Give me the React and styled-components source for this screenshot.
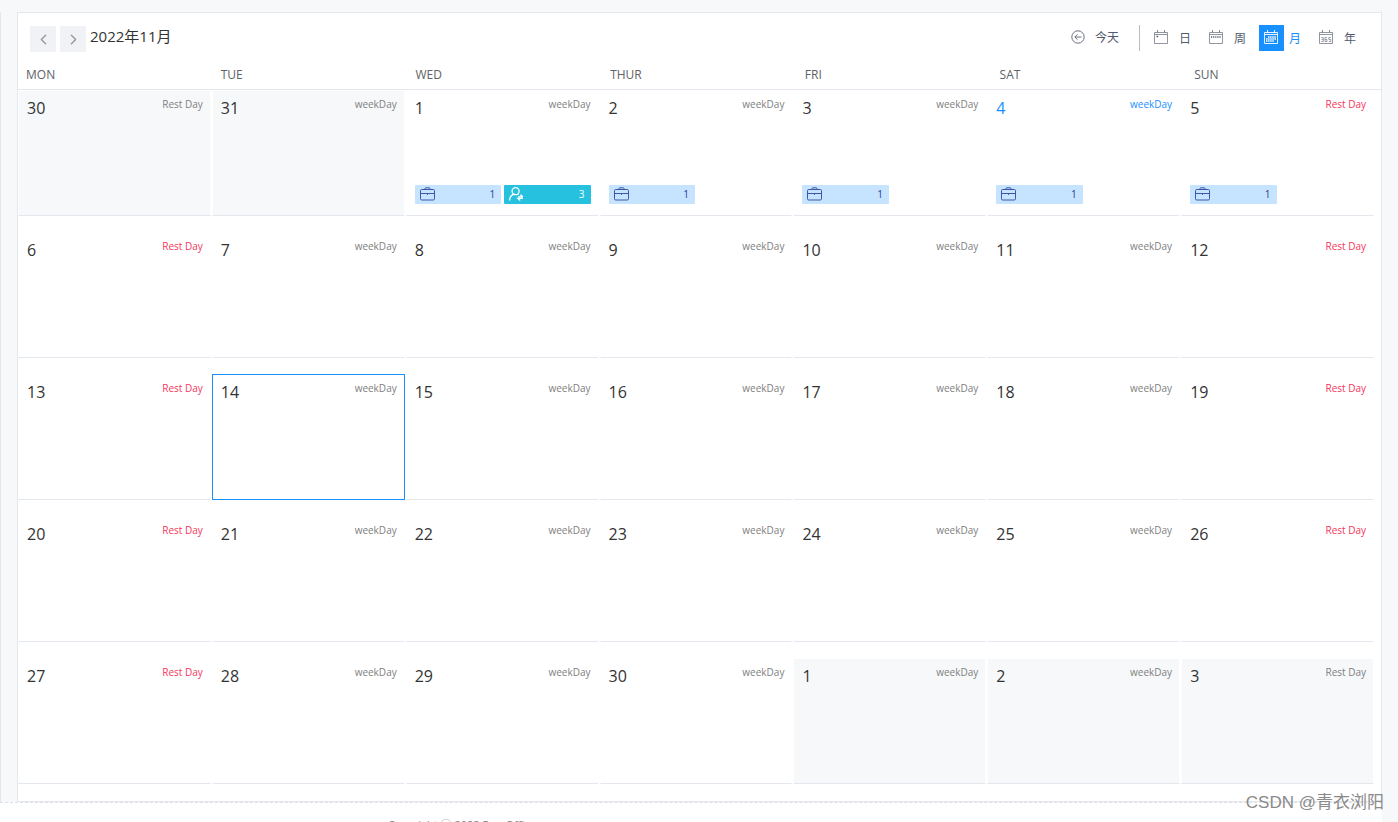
import React, { useState } from "react";
import styled, { createGlobalStyle, css } from "styled-components";
import { FiChevronLeft, FiChevronRight } from "react-icons/fi";

const WEEK_TITLES = ["MON", "TUE", "WED", "THUR", "FRI", "SAT", "SUN"];

// two days of October, thirty of November, three of December
const NUMBERS = [
  30,
  31,
  ...Array.from({ length: 30 }, (_, i) => i + 1),
  1,
  2,
  3,
];

const DAYS = NUMBERS.map((number, i) => ({
  id: i,
  number,
  isOther: i < 2 || i > 31,
  isRest: i % 7 === 0 || i % 7 === 6,
  isToday: i === 5,
}));

const EVENTS = {
  2: [
    { type: "work", count: 1 },
    { type: "person", count: 3 },
  ],
  3: [{ type: "work", count: 1 }],
  4: [{ type: "work", count: 1 }],
  5: [{ type: "work", count: 1 }],
  6: [{ type: "work", count: 1 }],
};

const VIEWS = [
  { id: "day", label: "日" },
  { id: "week", label: "周" },
  { id: "month", label: "月" },
  { id: "year", label: "年" },
];

export default function App() {
  const [view, setView] = useState("month");
  const [selectedDay, setSelectedDay] = useState(15);

  return (
    <Page>
      <GlobalStyle />
      <Main>
        <Content>
          <Card>
            <Toolbar>
              <NavButton aria-label="Previous month">
                <FiChevronLeft />
              </NavButton>
              <NavButton aria-label="Next month">
                <FiChevronRight />
              </NavButton>
              <Title>2022年11月</Title>
              <TodayButton>
                <BackIcon />
                今天
              </TodayButton>
              <Views>
                {VIEWS.map(({ id, label }) => (
                  <ViewButton
                    key={id}
                    $isActive={view === id}
                    onClick={() => setView(id)}
                  >
                    <span className="icon">
                      <CalendarIcon type={id} />
                    </span>
                    {label}
                  </ViewButton>
                ))}
              </Views>
            </Toolbar>
            <WeekHeader>
              {WEEK_TITLES.map((title) => (
                <span key={title}>{title}</span>
              ))}
            </WeekHeader>
            <MonthGrid>
              {DAYS.map((day) => (
                <DayCell
                  key={day.id}
                  $isSelected={selectedDay === day.id}
                  onClick={() => setSelectedDay(day.id)}
                >
                  <DayBody $isOther={day.isOther}>
                    <DayTop>
                      <DayNumber $isToday={day.isToday}>{day.number}</DayNumber>
                      <DayType
                        $isToday={day.isToday}
                        $isRest={day.isRest && !day.isOther}
                      >
                        {day.isRest ? "Rest Day" : "weekDay"}
                      </DayType>
                    </DayTop>
                    <Events>
                      {(EVENTS[day.id] || []).map(({ type, count }) => (
                        <EventTag key={type} $type={type}>
                          {type === "work" ? <BriefcaseIcon /> : <PersonIcon />}
                          {count}
                        </EventTag>
                      ))}
                    </Events>
                  </DayBody>
                </DayCell>
              ))}
            </MonthGrid>
          </Card>
        </Content>
        <Footer>Copyright ⓒ 2022 EasyOffice</Footer>
        <Watermark>CSDN @青衣浏阳</Watermark>
      </Main>
    </Page>
  );
}

function BackIcon() {
  return (
    <svg width="14" height="14" viewBox="0 0 14 14" fill="none" stroke="#6b7080">
      <circle cx="7" cy="7" r="6.2" />
      <path d="M10.5 7H4M6.5 4.3L3.8 7l2.7 2.7" />
    </svg>
  );
}

function CalendarIcon({ type }) {
  return (
    <svg width="14" height="14" viewBox="0 0 14 14" fill="none" stroke="currentColor">
      <path d="M.5 2.5h13v11H.5zM.5 4.5h13" strokeWidth="0.9" />
      <path d="M3.5 0v3M10.5 0v3" />
      {type === "day" && <path d="M2.5 6.5h1.6" stroke="#515a6e" strokeWidth="1.6" />}
      {type === "week" && (
        <path
          d="M2 7h10"
          stroke="#515a6e"
          strokeWidth="1.4"
          strokeDasharray="1.2 0.9"
        />
      )}
      {type === "month" && (
        <path
          d="M4 7h8M2 9h10M2 11h8"
          strokeWidth="1.5"
          strokeDasharray="1.5 0.6"
        />
      )}
      {type === "year" && (
        <path
          d="M2.3 7.5h2v4h-2M2.6 9.5h1.7M8 7.5H6v4h2v-2H6M11.8 7.5h-2v2h2v2h-2"
          strokeWidth="0.8"
        />
      )}
    </svg>
  );
}

function BriefcaseIcon() {
  return (
    <svg width="15" height="14" viewBox="0 0 15 14" fill="none" stroke="#3a57a8">
      <rect x="0.5" y="2.5" width="14" height="10.5" rx="1.2" />
      <path d="M5 2.5V1.6Q5 .8 5.8.8h3.4q.8 0 .8.8v.9M.5 6.5h14M7.5 6.5v1.4" />
    </svg>
  );
}

function PersonIcon() {
  return (
    <svg width="14" height="14" viewBox="0 0 14 14" fill="none" stroke="#fff" strokeWidth="1.3">
      <circle cx="6.6" cy="4.2" r="3.5" />
      <path d="M.6 13.6c0-3.2 1.6-5.4 4.2-6.2M8.4 7.2l1 .6" />
      <path d="M9 9.8h4.8L11.4 7.8M13.8 11.4H9l2.2 2" />
    </svg>
  );
}

const GlobalStyle = createGlobalStyle`
  * {
    box-sizing: border-box;
  }

  body {
    margin: 0;
    background: #f6f8fa;
    color: #333;
    font-family: "Open Sans", "Noto Sans CJK SC", sans-serif;
    font-size: 12px;
  }

  button {
    padding: 0;
    border: 0;
    background: none;
    color: inherit;
    font: inherit;
    text-align: left;
    cursor: pointer;
  }

  svg {
    display: block;
    flex: none;
  }
`;

const Page = styled.div`
  height: 100vh;
  overflow: hidden;
  padding: 12px 16px 0 0;
`;

const Main = styled.main`
  position: relative;
`;

const Content = styled.div`
  padding-left: 16px;
  border-left: 1px solid #e4e7ed;
`;

const Card = styled.section`
  border: 1px solid #e4e7ed;
  background: #fff;
  padding-bottom: 17px;
`;

const Toolbar = styled.div`
  display: flex;
  align-items: center;
  height: 48px;
  padding: 2px 25px 0 12px;
`;

const NavButton = styled.button`
  display: flex;
  align-items: center;
  justify-content: center;
  width: 26px;
  height: 26px;
  margin: 2px 4px 0 0;
  background: #f0f2f5;
  color: #999;
  font-size: 17px;
`;

const Title = styled.h1`
  margin: 0;
  padding-bottom: 4px;
  font-size: 15px;
  font-weight: 400;
  line-height: 20px;
`;

const TodayButton = styled.button`
  display: flex;
  align-items: center;
  gap: 10px;
  margin-left: auto;
  padding-bottom: 2px;
  color: #515a6e;
`;

const Views = styled.div`
  display: flex;
  gap: 13px;
  margin-left: 20px;
  padding-left: 9px;
  border-left: 1px solid #b8bcc4;
`;

const ViewButton = styled.button`
  display: flex;
  align-items: center;
  gap: 5px;
  color: #515a6e;

  .icon {
    display: flex;
    align-items: center;
    justify-content: center;
    width: 25px;
    height: 26px;
    padding-bottom: 2px;
    color: #858a96;
  }

  ${({ $isActive }) =>
    $isActive &&
    css`
      color: #1890ff;

      .icon {
        background: #1890ff;
        color: #fff;
      }
    `}
`;

const WeekHeader = styled.div`
  display: grid;
  grid-template-columns: repeat(7, 1fr);
  height: 29px;
  border-bottom: 1px solid #e4e7ed;
  color: #606266;
  font-size: 12px;
  line-height: 28px;

  span {
    padding-left: 8px;
  }
`;

const MonthGrid = styled.div`
  display: grid;
  grid-template-columns: repeat(7, 1fr);
  row-gap: 16px;
  padding-right: 6px;
`;

const DayCell = styled.button`
  display: flex;
  height: 126px;
  margin-right: 1px;
  border: 1px solid transparent;
  border-bottom-color: #e4e7ed;

  ${({ $isSelected }) =>
    $isSelected &&
    css`
      border-color: #1890ff;
    `}
`;

const DayBody = styled.span`
  display: flex;
  flex-direction: column;
  justify-content: space-between;
  width: 100%;
  height: 100%;
  padding: 5px 7px 11px 8px;
  background: ${({ $isOther }) => ($isOther ? "#f6f8fa" : "transparent")};
`;

const DayTop = styled.span`
  display: flex;
  justify-content: space-between;
`;

const DayNumber = styled.span`
  color: ${({ $isToday }) => ($isToday ? "#1890ff" : "#333")};
  font-size: 16px;
  line-height: 24px;
`;

const DayType = styled.span`
  color: ${({ $isToday, $isRest }) =>
    $isToday ? "#1890ff" : $isRest ? "#f5365c" : "#808080"};
  font-size: 10px;
  line-height: 16px;
`;

const Events = styled.span`
  display: grid;
  grid-template-columns: 1fr 1fr;
  gap: 3px;
`;

const EventTag = styled.span`
  display: flex;
  align-items: center;
  justify-content: space-between;
  height: 19px;
  padding: 0 6px 1px 5px;
  border-radius: 1px;
  background: ${({ $type }) => ($type === "work" ? "#c6e3ff" : "#26c1de")};
  color: ${({ $type }) => ($type === "work" ? "#2c3e90" : "#fff")};
  font-size: 10px;
`;

const Footer = styled.footer`
  height: 60px;
  padding: 13px 0 0 388px;
  border-top: 1px dashed #dcdfe6;
  background: #fff;
  color: #808080;
  font-size: 11px;
  line-height: 18px;
`;

const Watermark = styled.div`
  position: absolute;
  right: -2px;
  bottom: 39px;
  color: #8a8a8a;
  font-family: "Liberation Sans", "Noto Sans CJK SC", sans-serif;
  font-size: 17px;
  line-height: 40px;
`;
